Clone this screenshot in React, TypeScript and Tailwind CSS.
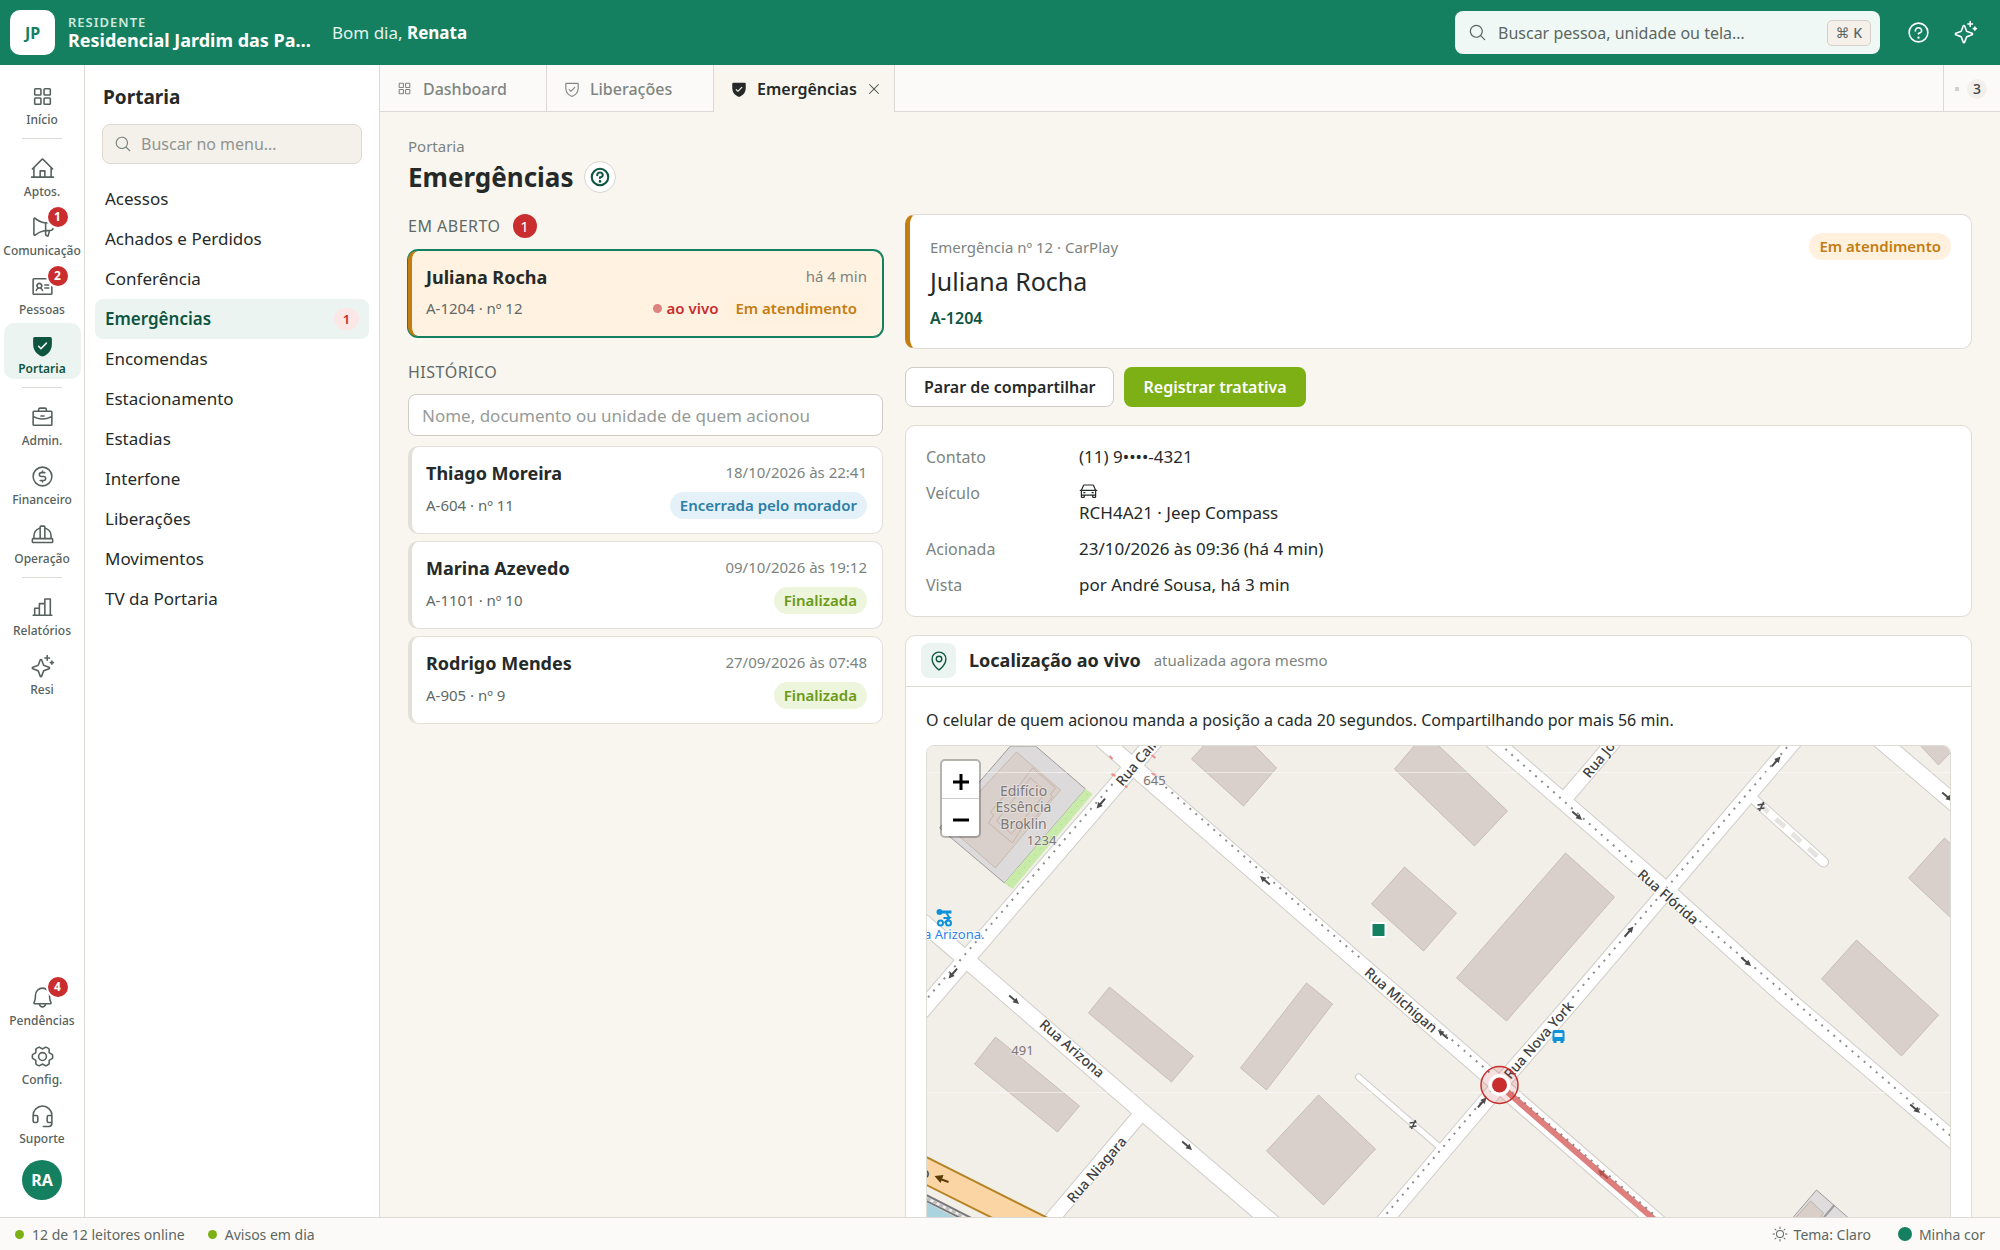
import React from 'react';
import type { IconType } from 'react-icons';
import {
  PiBell,
  PiBriefcase,
  PiCar,
  PiChartBar,
  PiCurrencyCircleDollar,
  PiGearSix,
  PiHardHat,
  PiHeadset,
  PiHouseLine,
  PiIdentificationCard,
  PiMagnifyingGlass,
  PiMapPin,
  PiMegaphone,
  PiQuestion,
  PiQuestionBold,
  PiShieldCheck,
  PiShieldCheckFill,
  PiSparkle,
  PiSquaresFour,
  PiSun,
  PiX,
} from 'react-icons/pi';

interface RailItem {
  label: string;
  icon: IconType;
  badge?: number;
  active?: boolean;
}

const railGroups: RailItem[][] = [
  [{ label: 'Início', icon: PiSquaresFour }],
  [
    { label: 'Aptos.', icon: PiHouseLine },
    { label: 'Comunicação', icon: PiMegaphone, badge: 1 },
    { label: 'Pessoas', icon: PiIdentificationCard, badge: 2 },
    { label: 'Portaria', icon: PiShieldCheckFill, active: true },
  ],
  [
    { label: 'Admin.', icon: PiBriefcase },
    { label: 'Financeiro', icon: PiCurrencyCircleDollar },
    { label: 'Operação', icon: PiHardHat },
  ],
  [
    { label: 'Relatórios', icon: PiChartBar },
    { label: 'Resi', icon: PiSparkle },
  ],
];

const railBottom: RailItem[] = [
  { label: 'Pendências', icon: PiBell, badge: 4 },
  { label: 'Config.', icon: PiGearSix },
  { label: 'Suporte', icon: PiHeadset },
];

const menu = [
  'Acessos',
  'Achados e Perdidos',
  'Conferência',
  'Emergências',
  'Encomendas',
  'Estacionamento',
  'Estadias',
  'Interfone',
  'Liberações',
  'Movimentos',
  'TV da Portaria',
];

const history = [
  { name: 'Thiago Moreira', date: '18/10/2026 às 22:41', unit: 'A-604 · nº 11', status: 'Encerrada pelo morador', tone: 'info' },
  { name: 'Marina Azevedo', date: '09/10/2026 às 19:12', unit: 'A-1101 · nº 10', status: 'Finalizada', tone: 'ok' },
  { name: 'Rodrigo Mendes', date: '27/09/2026 às 07:48', unit: 'A-905 · nº 9', status: 'Finalizada', tone: 'ok' },
] as const;

const tones = {
  info: 'bg-[#e5f1f8] text-[#2b7ea6]',
  ok: 'bg-[#edf5dc] text-[#6a9a14]',
  warn: 'bg-[#fff1de] text-[#c47d10]',
};

function Pill({ tone, children }: { tone: keyof typeof tones; children: React.ReactNode }) {
  return (
    <span className={`rounded-full px-[10px] text-[15px] leading-[27px] font-semibold ${tones[tone]}`}>
      {children}
    </span>
  );
}

function Header() {
  return (
    <header className="flex h-[65px] shrink-0 items-center bg-[#148060] pr-[22px] pl-[10px] text-white">
      <div className="flex size-[45px] items-center justify-center rounded-[10px] bg-white text-base font-bold text-[#148060]">
        JP
      </div>
      <div className="ml-[13px] w-[247px]">
        <p className="text-[13px] leading-[15px] font-semibold tracking-[1px] text-[#cfe8df]">RESIDENTE</p>
        <p className="truncate text-[18px] leading-[20px] font-bold">Residencial Jardim das Paineiras</p>
      </div>
      <p className="ml-[17px] text-[17px] text-[#e3f3ed]">
        Bom dia, <strong className="font-bold text-white">Renata</strong>
      </p>
      <label className="ml-auto flex h-[43px] w-[425px] items-center rounded-lg bg-[#f0f8f5] pr-[9px] pl-[13px] text-[#5c6762]">
        <PiMagnifyingGlass className="size-[19px]" />
        <input
          type="text"
          aria-label="Buscar pessoa, unidade ou tela"
          placeholder="Buscar pessoa, unidade ou tela…"
          className="ml-[11px] min-w-0 flex-1 bg-transparent text-base outline-none placeholder:text-[#5c6762]"
        />
        <kbd className="rounded-[5px] border border-[#d5d1ca] bg-[#f5f1ea] px-2 font-[inherit] text-[14px] leading-6 font-medium">
          ⌘ K
        </kbd>
      </label>
      <button type="button" aria-label="Ajuda" className="ml-[26px]">
        <PiQuestion className="size-[25px]" />
      </button>
      <button type="button" aria-label="Resi" className="ml-[22px]">
        <PiSparkle className="size-[25px]" />
      </button>
    </header>
  );
}

function RailButton({ label, icon: Icon, badge, active }: RailItem) {
  return (
    <button
      type="button"
      className={`flex h-14 w-[77px] flex-col items-center rounded-[10px] pt-[10px] text-xs leading-[18px] whitespace-nowrap ${
        active ? 'bg-[#ecf4f1] font-semibold text-[#0e5540]' : 'font-medium text-[#56615c]'
      }`}
    >
      <span className="relative mb-[2px]">
        <Icon className="size-[25px]" />
        {badge && (
          <span className="absolute -top-[10px] left-4 size-6 rounded-full border-2 border-white bg-[#c92d2d] text-center text-xs leading-5 font-bold text-white">
            {badge}
          </span>
        )}
      </span>
      {label}
    </button>
  );
}

function Rail() {
  return (
    <nav className="flex w-[85px] shrink-0 flex-col items-center gap-[3px] border-r border-[#dddad5] bg-white pt-[9px] pb-[17px]">
      {railGroups.map((group, i) => (
        <React.Fragment key={i}>
          {i > 0 && <hr className="mt-[5px] mb-1 w-10 border-[#dddad5]" />}
          {group.map((item) => (
            <RailButton key={item.label} {...item} />
          ))}
        </React.Fragment>
      ))}
      <div className="mt-auto flex flex-col items-center gap-[3px]">
        {railBottom.map((item) => (
          <RailButton key={item.label} {...item} />
        ))}
      </div>
      <button type="button" className="mt-2 size-10 rounded-full bg-[#148060] text-base font-bold text-white">
        RA
      </button>
    </nav>
  );
}

function SideMenu() {
  return (
    <aside className="w-[295px] shrink-0 border-r border-[#dddad5] bg-white px-[10px] pt-[18px]">
      <h2 className="px-2 text-[19px] leading-7 font-bold">Portaria</h2>
      <label className="mx-[7px] mt-[13px] flex h-10 items-center rounded-lg border border-[#dfdbd2] bg-[#f4f1ea] pl-[11px] text-[#7c8480]">
        <PiMagnifyingGlass className="size-[18px]" />
        <input
          type="text"
          aria-label="Buscar no menu"
          placeholder="Buscar no menu…"
          className="ml-[9px] min-w-0 flex-1 bg-transparent text-base outline-none placeholder:text-[#8f9491]"
        />
      </label>
      <ul className="mt-[15px]">
        {menu.map((item) => {
          const active = item === 'Emergências';
          return (
            <li key={item}>
              <a
                href="#"
                className={`flex h-10 items-center justify-between rounded-lg px-[10px] ${
                  active ? 'bg-[#ecf4f1] text-[17px] font-semibold text-[#0e5540]' : 'text-[17px]'
                }`}
              >
                {item}
                {active && (
                  <span className="w-[25px] rounded-full bg-[#fbe7e6] text-center text-[13px] leading-[22px] text-[#c92d2d]">
                    1
                  </span>
                )}
              </a>
            </li>
          );
        })}
      </ul>
    </aside>
  );
}

function Tabs() {
  return (
    <div className="flex h-[47px] shrink-0 bg-[#fcfaf8] text-base font-medium text-[#7f8582]">
      <button type="button" className="flex w-[167px] items-center gap-[10px] border-r border-b border-[#dddad5] pt-px pl-4">
        <PiSquaresFour className="size-[17px]" />
        Dashboard
      </button>
      <button type="button" className="flex w-[167px] items-center gap-[9px] border-r border-b border-[#dddad5] pt-px pl-4">
        <PiShieldCheck className="size-[18px]" />
        Liberações
      </button>
      <div className="flex w-[181px] items-center border-r border-[#dddad5] bg-[#f9f6f0] pr-3 pl-4 text-[#252a28]">
        <button type="button" className="flex items-center gap-[9px] font-semibold">
          <PiShieldCheckFill className="size-[18px]" />
          Emergências
        </button>
        <button type="button" aria-label="Fechar aba" className="ml-auto">
          <PiX className="size-4 text-[#4c5551]" />
        </button>
      </div>
      <div className="flex-1 border-b border-[#dddad5]" />
      <div className="flex w-[57px] items-center justify-end gap-2 border-b border-l border-[#dddad5] pt-px pr-[13px]">
        <span className="size-1 bg-[#d3d0cb]" />
        <span className="size-5 rounded-full bg-[#f3f0eb] text-center text-[14px] leading-5 text-[#3f4643]">3</span>
      </div>
    </div>
  );
}

function EmergencyList() {
  return (
    <div className="w-[475px] shrink-0">
      <h3 className="flex items-center gap-3 text-base leading-6 tracking-[0.5px] text-[#5f6965]">
        EM ABERTO
        <span className="size-6 rounded-full bg-[#c92d2d] text-center text-[15px] tracking-normal text-white">1</span>
      </h3>
      <button
        type="button"
        className="mt-3 block w-full rounded-[10px] border border-l-4 border-[#148060] border-l-[#c47d10] bg-[#fff2e1] pt-[11px] pr-[15px] pb-[13px] pl-[14px] text-left ring-1 ring-[#148060]"
      >
        <span className="flex justify-between">
          <span className="text-[18px] leading-[30px] font-bold">Juliana Rocha</span>
          <span className="text-[15px] leading-7 text-[#7c8480]">há 4 min</span>
        </span>
        <span className="mt-[2px] flex items-center justify-between text-[15px] leading-[29px] text-[#5f6965]">
          A-1204 · nº 12
          <span className="flex items-center">
            <span className="mr-[5px] size-[9px] rounded-full bg-[#dd8380]" />
            <span className="mr-[7px] font-semibold text-[#c92d2d]">ao vivo</span>
            <Pill tone="warn">Em atendimento</Pill>
          </span>
        </span>
      </button>

      <h3 className="mt-[23px] text-base leading-6 tracking-[0.5px] text-[#5f6965]">HISTÓRICO</h3>
      <input
        type="text"
        aria-label="Buscar no histórico"
        placeholder="Nome, documento ou unidade de quem acionou"
        className="mt-[10px] mb-[10px] block h-[42px] w-full rounded-lg border border-[#cfccc6] bg-white px-[13px] text-[17px] outline-none placeholder:text-[#969b98]"
      />
      <ul className="flex flex-col gap-[7px]">
        {history.map((item) => (
          <li key={item.name}>
            <button
              type="button"
              className="block w-full rounded-[10px] border border-l-4 border-[#e3e0da] bg-white pt-[11px] pr-[15px] pb-[13px] pl-[14px] text-left"
            >
              <span className="flex justify-between">
                <span className="text-[18px] leading-[30px] font-bold">{item.name}</span>
                <span className="text-[15px] leading-7 text-[#7c8480]">{item.date}</span>
              </span>
              <span className="mt-[3px] flex items-center justify-between text-[15px] leading-[29px] text-[#5f6965]">
                {item.unit}
                <Pill tone={item.tone}>{item.status}</Pill>
              </span>
            </button>
          </li>
        ))}
      </ul>
    </div>
  );
}

interface Road {
  d: string;
  w: number;
}

const roads: Road[] = [
  { d: 'M1876 736 1964 811', w: 16 },
  { d: 'M1567 797 1620 735', w: 14 },
  { d: 'M1143 1112 1005 1275', w: 14 },
  { d: 'M915 915 966 959 1143 1112 1266 1217 1325 1268', w: 16 },
  { d: 'M1160 735 915 1019', w: 16 },
  { d: 'M1096 734 1333 940 1500 1085 1652 1217 1710 1267', w: 16 },
  { d: 'M1800 735 1574 1000 1500 1085 1340 1274', w: 15 },
  { d: 'M1487 735 1664 888 1789 1000 1962 1147', w: 16 },
  { d: 'M1359 1077 1440 1147', w: 5 },
  { d: 'M1754 799 1824 862', w: 9 },
];

const dotted = [
  'M1113 784 915 1013',
  'M1166 787 1336 937 1362 959',
  'M1434 1024 1655 1215 1712 1265',
  'M1798 735 1571 1000',
  'M1497 1084 1336 1274',
  'M1488 733 1636 865',
  'M1700 921 1792 999 1964 1147',
];

const buildings = [
  '1192,759 1214,735 1245,735 1277,768 1244,806',
  '1395,769 1424,735 1428,735 1508,811 1475,846',
  '1405,867 1372,904 1424,951 1457,913',
  '1566,853 1615,897 1507,1021 1457,978',
  '1110,987 1194,1056 1172,1082 1089,1013',
  '996,1037 1080,1106 1058,1132 975,1064',
  '1307,983 1333,1004 1267,1090 1241,1068',
  '1319,1095 1376,1149 1324,1205 1267,1151',
  '1857,940 1939,1015 1902,1056 1822,979',
  '1945,838 1909,878 1960,926 1960,852',
  '1911,735 1939,765 1960,743 1960,735',
];

const streetNames = [
  { x: 1123, y: 787, angle: -50, name: 'Rua Califórnia' },
  { x: 1364, y: 974, angle: 41, name: 'Rua Michigan' },
  { x: 1039, y: 1026, angle: 41, name: 'Rua Arizona' },
  { x: 1074, y: 1204, angle: -49, name: 'Rua Niagara' },
  { x: 1637, y: 876, angle: 41, name: 'Rua Flórida' },
  { x: 1590, y: 779, angle: -51, name: 'Rua Joaquim' },
  { x: 1511, y: 1080, angle: -49, name: 'Rua Nova York' },
];

const places = [
  { x: 1024, y: 796, text: 'Edifício' },
  { x: 1024, y: 812, text: 'Essência' },
  { x: 1024, y: 829, text: 'Broklin' },
  { x: 1042, y: 845, text: '1234' },
  { x: 1155, y: 785, text: '645' },
  { x: 1023, y: 1055, text: '491' },
];

// one-way arrows: x, y, heading in degrees
const arrows = [
  [1101, 804, 131],
  [1265, 880, 221],
  [953, 974, 131],
  [1015, 1000, 41],
  [1188, 1146, 41],
  [1443, 1034, 221],
  [1578, 816, 41],
  [1777, 761, -49],
  [1630, 931, -49],
  [1747, 962, 41],
  [1916, 1109, 41],
  [1483, 1102, -49],
  [1603, 1174, 221],
  [1948, 797, 41],
];

function StreetMap() {
  return (
    <svg viewBox="927 746 1024 520" preserveAspectRatio="xMidYMin slice" className="block h-[520px] w-full" fontFamily='"Noto Sans", sans-serif'>
      <rect x="900" y="720" width="1100" height="600" fill="#f2efe9" />
      <polygon points="1011,746 1036,746 1086,789 1005,883 940,828" fill="#dddadb" stroke="#9d9b9a" />
      <polygon points="1017,752 1061,790 996,868 948,826" fill="#d9cfcb" stroke="#c8b9ae" />
      <path
        d="M1033 768 1056 788 1051 794 1053 797 1030 824 1026 822 1013 843 989 823 994 815 991 812 1010 790 1014 793zM1031 778 1047 792 1012 834 997 821z"
        fill="none"
        stroke="#c8b4a8"
      />
      <polygon points="1086,789 1093,794 1013,889 1005,883" fill="#c8eba9" />
      <path d="M1088 794 1009 886" stroke="#9fca7e" strokeDasharray="1 7" />

      {buildings.map((points) => (
        <polygon key={points} points={points} fill="#d9d0cb" stroke="#c9bdb4" />
      ))}
      <polygon points="1817,1190 1770,1245 1800,1266 1880,1245" fill="#dedcdc" stroke="#9d9b9a" />
      <polygon points="1811,1201 1824,1213 1810,1235 1785,1230" fill="#d9cfc8" stroke="#b9b0aa" />
      <path d="M1835 1205 1812 1232" stroke="#9d9b9a" strokeWidth="2" />

      {roads.map((r) => (
        <path key={r.d} d={r.d} fill="none" stroke="#cfcdc9" strokeWidth={r.w + 2} strokeLinecap="round" />
      ))}
      {roads.map((r) => (
        <path key={r.d} d={r.d} fill="none" stroke="#ffffff" strokeWidth={r.w} strokeLinecap="round" />
      ))}
      <path d="M1760 804 1824 862" stroke="#e6e4e1" strokeWidth="5" strokeDasharray="12 10" />
      {dotted.map((d) => (
        <path key={d} d={d} fill="none" stroke="#8d8d8d" strokeWidth="2" strokeDasharray="2 6" />
      ))}
      <path d="M1110 756l3 3M1152 755l4 3M1112 774l4 2M1152 773l5 3M1125 786l3 1" stroke="#f08a8a" strokeWidth="2" />

      <polygon points="915,1196 990,1235 915,1235" fill="#abd3de" />
      <path d="M915 1189 1015 1240M915 1195 1005 1240" stroke="#77777a" strokeWidth="2" fill="none" />
      <path d="M915 1192 1010 1240" stroke="#bfbfc2" strokeWidth="3" strokeDasharray="4 3" fill="none" />
      <polygon points="915,1151 1100,1244 1045,1244 915,1179" fill="#fbd6a4" stroke="#b58424" strokeWidth="2" />
      <path d="M949 1182 938 1178" stroke="#5c3c06" strokeWidth="2" />
      <polygon points="935,1176 944,1175 941,1183" fill="#5c3c06" />
      <text x="921" y="1178" fontSize="15" fill="#5c3c06">o</text>

      <path d="M927 772.5H1951M927 1092.5H1951" stroke="#ffffff" opacity="0.55" />

      {arrows.map(([x, y, a]) => (
        <g key={`${x}-${y}`} transform={`translate(${x} ${y}) rotate(${a})`} fill="#4b4b4b">
          <path d="M-7-1H0V-3L6 0 0 3V1H-7z" />
        </g>
      ))}
      <path
        d="M1410 1123l7-1M1410 1127l7-1M1416 1120l-4 9M1758 805l7-1M1758 809l7-1M1764 802l-4 9"
        stroke="#4b4b4b"
        strokeWidth="1.5"
      />

      {streetNames.map((s) => (
        <text
          key={s.name}
          transform={`translate(${s.x} ${s.y}) rotate(${s.angle})`}
          fontSize="14"
          fontWeight="500"
          fill="#414141"
          stroke="#ffffff"
          strokeWidth="2"
          paintOrder="stroke"
        >
          {s.name}
        </text>
      ))}
      {places.map((p) => (
        <text
          key={p.text}
          x={p.x}
          y={p.y}
          fontSize={/\d/.test(p.text) ? 13 : 14}
          textAnchor="middle"
          fill="#7d7775"
          stroke="#efecea"
          strokeOpacity="0.6"
          strokeWidth="2"
          paintOrder="stroke"
        >
          {p.text}
        </text>
      ))}
      <text x="985" y="939" fontSize="13" textAnchor="end" fill="#2f7ff0" stroke="#ffffff" strokeWidth="2" paintOrder="stroke">
        a Arizona.
      </text>

      {/* scooter rental */}
      <g stroke="#0d92da" strokeWidth="2" fill="none">
        <path d="M940 912H952" strokeWidth="3" />
        <path d="M944 918H950L945 923M950 918 947 913" />
        <circle cx="941" cy="923" r="2.5" />
        <circle cx="949" cy="923" r="2.5" />
      </g>
      <circle cx="940" cy="912" r="3" fill="#0d92da" />
      {/* bus stop */}
      <path d="M1555 1030h8q2 0 2 2v9h-1v2h-3v-2h-4v2h-3v-2h-1v-9q0-2 2-2z" fill="#0d92da" />
      <rect x="1555" y="1033" width="8" height="4" fill="#e9f5fc" />

      <path d="M1500 1085 1603 1175 1652 1217 1710 1268" stroke="#d25450" strokeOpacity="0.75" strokeWidth="6" fill="none" />
      <circle cx="1500" cy="1085" r="18.5" fill="#c92d2d" fillOpacity="0.15" stroke="#c92d2d" strokeWidth="1.5" />
      <circle cx="1500" cy="1085" r="11" fill="#ffffff" />
      <circle cx="1500" cy="1085" r="7.5" fill="#c92d2d" />
      <rect x="1371" y="922" width="16" height="16" rx="2" fill="#ffffff" />
      <rect x="1373" y="924" width="12" height="12" fill="#148060" />
    </svg>
  );
}

function Detail() {
  return (
    <div className="flex min-w-0 flex-1 flex-col gap-[18px]">
      <section className="flex items-start justify-between rounded-[10px] border border-l-[5px] border-[#dfdcd4] border-l-[#c47d10] bg-white pt-[18px] pr-5 pb-[18px] pl-5">
        <div>
          <p className="text-[15px] leading-7 text-[#7c8480]">Emergência nº 12 · CarPlay</p>
          <h2 className="mt-[2px] text-[25px] leading-9">Juliana Rocha</h2>
          <p className="mt-[7px] text-base leading-6 font-semibold text-[#0e5540]">A-1204</p>
        </div>
        <Pill tone="warn">Em atendimento</Pill>
      </section>

      <div className="flex gap-[10px] text-base font-semibold">
        <button type="button" className="h-10 rounded-lg border border-[#cfccc6] bg-white px-[18px]">
          Parar de compartilhar
        </button>
        <button type="button" className="h-10 rounded-lg bg-[#7cb015] px-[19px] text-white">
          Registrar tratativa
        </button>
      </div>

      <dl className="grid grid-cols-[153px_1fr] gap-y-[14px] rounded-[10px] border border-[#dfdcd4] bg-white p-5 text-[17px] leading-[22px]">
        <dt className="text-base leading-[22px] text-[#7c8480]">Contato</dt>
        <dd>(11) 9••••-4321</dd>
        <dt className="text-base leading-[22px] text-[#7c8480]">Veículo</dt>
        <dd>
          <PiCar className="mb-[1px] block size-[19px]" />
          RCH4A21 · Jeep Compass
        </dd>
        <dt className="text-base leading-[22px] text-[#7c8480]">Acionada</dt>
        <dd>23/10/2026 às 09:36 (há 4 min)</dd>
        <dt className="text-base leading-[22px] text-[#7c8480]">Vista</dt>
        <dd>por André Sousa, há 3 min</dd>
      </dl>

      <section className="rounded-[10px] border border-[#dfdcd4] bg-white">
        <div className="flex h-[51px] items-center border-b border-[#dfdcd4] px-[15px] pb-px">
          <span className="flex size-[35px] items-center justify-center rounded-lg bg-[#ecf4f1] text-[#0e5540]">
            <PiMapPin className="size-[22px]" />
          </span>
          <h3 className="ml-[13px] text-[18px] font-bold">Localização ao vivo</h3>
          <span className="ml-[13px] text-[15px] text-[#7c8480]">atualizada agora mesmo</span>
        </div>
        <div className="px-5 pt-[21px] pb-5">
          <p className="text-base leading-6">
            O celular de quem acionou manda a posição a cada 20 segundos. Compartilhando por mais 56 min.
          </p>
          <div className="relative mt-[13px] overflow-hidden rounded-lg border border-[#dfdcd4]">
            <StreetMap />
            <div className="absolute top-[13px] left-[13px] flex flex-col rounded-[5px] border-2 border-black/25 bg-white bg-clip-padding text-black">
              <button type="button" aria-label="Aproximar" className="flex h-[38px] w-[37px] items-center justify-center border-b border-[#cccccc] pt-1">
                <svg viewBox="0 0 16 16" className="size-4">
                  <path d="M0 8H16M8 0V16" stroke="currentColor" strokeWidth="3" />
                </svg>
              </button>
              <button type="button" aria-label="Afastar" className="flex h-[37px] w-[37px] items-center justify-center pt-1">
                <svg viewBox="0 0 16 16" className="size-4">
                  <path d="M0 8H16" stroke="currentColor" strokeWidth="3" />
                </svg>
              </button>
            </div>
          </div>
        </div>
      </section>
    </div>
  );
}

function StatusBar() {
  return (
    <footer className="flex h-[33px] shrink-0 items-center border-t border-[#dddad5] bg-[#fcfaf8] px-[15px] text-[14px] text-[#5c6762]">
      <span className="mr-2 size-[9px] rounded-full bg-[#7cb015]" />
      12 de 12 leitores online
      <span className="mr-2 ml-[23px] size-[9px] rounded-full bg-[#7cb015]" />
      Avisos em dia
      <button type="button" className="ml-auto flex items-center gap-[6px]">
        <PiSun className="size-4" />
        Tema: Claro
      </button>
      <button type="button" className="ml-[27px] flex items-center gap-[7px]">
        <span className="size-[14px] rounded-full bg-[#148060]" />
        Minha cor
      </button>
    </footer>
  );
}

export default function App() {
  return (
    <div className="flex h-screen flex-col overflow-hidden bg-[#f9f6f0] font-['Noto_Sans','DejaVu_Sans',sans-serif] text-[#252a28]">
      <Header />
      <div className="flex min-h-0 flex-1">
        <Rail />
        <SideMenu />
        <div className="flex min-w-0 flex-1 flex-col">
          <Tabs />
          <main className="min-h-0 flex-1 overflow-hidden px-7 pt-[23px]">
            <p className="text-[15px] leading-[22px] text-[#7c8480]">Portaria</p>
            <div className="mt-1 flex h-8 items-center gap-[11px]">
              <h1 className="text-[26px] font-bold">Emergências</h1>
              <button
                type="button"
                aria-label="Ajuda sobre emergências"
                className="flex size-8 items-center justify-center rounded-full border border-[#d9d6d0] bg-white text-[#0e5540]"
              >
                <PiQuestionBold className="size-[22px]" />
              </button>
            </div>
            <div className="mt-[21px] flex gap-[22px]">
              <EmergencyList />
              <Detail />
            </div>
          </main>
        </div>
      </div>
      <StatusBar />
    </div>
  );
}
